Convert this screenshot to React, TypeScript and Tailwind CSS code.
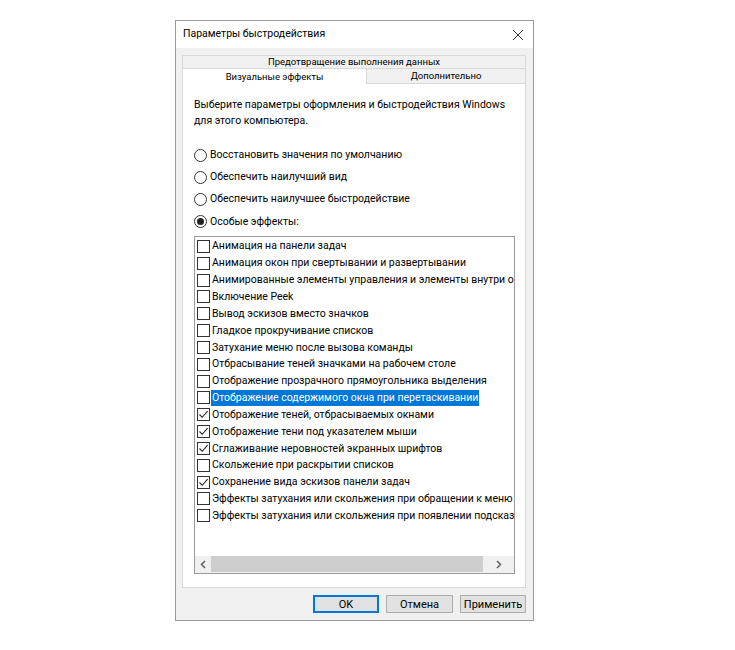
import React from 'react';

type Effect = { label: string; checked: boolean; selected?: boolean };

const effects: Effect[] = [
  { label: 'Анимация на панели задач', checked: false },
  { label: 'Анимация окон при свертывании и развертывании', checked: false },
  { label: 'Анимированные элементы управления и элементы внутри окна', checked: false },
  { label: 'Включение Peek', checked: false },
  { label: 'Вывод эскизов вместо значков', checked: false },
  { label: 'Гладкое прокручивание списков', checked: false },
  { label: 'Затухание меню после вызова команды', checked: false },
  { label: 'Отбрасывание теней значками на рабочем столе', checked: false },
  { label: 'Отображение прозрачного прямоугольника выделения', checked: false },
  { label: 'Отображение содержимого окна при перетаскивании', checked: false, selected: true },
  { label: 'Отображение теней, отбрасываемых окнами', checked: true },
  { label: 'Отображение тени под указателем мыши', checked: true },
  { label: 'Сглаживание неровностей экранных шрифтов', checked: true },
  { label: 'Скольжение при раскрытии списков', checked: false },
  { label: 'Сохранение вида эскизов панели задач', checked: true },
  { label: 'Эффекты затухания или скольжения при обращении к меню', checked: false },
  { label: 'Эффекты затухания или скольжения при появлении подсказок', checked: false },
];

const radios = [
  { label: 'Восстановить значения по умолчанию', on: false },
  { label: 'Обеспечить наилучший вид', on: false },
  { label: 'Обеспечить наилучшее быстродействие', on: false },
  { label: 'Особые эффекты:', on: true },
];

const Radio = ({ on }: { on: boolean }) => (
  <span className="w-[13px] h-[13px] rounded-full border border-[#333] bg-white flex items-center justify-center shrink-0">
    {on && <span className="w-[7px] h-[7px] rounded-full bg-[#222]" />}
  </span>
);

const Checkbox = ({ checked }: { checked: boolean }) => (
  <span className="w-[13px] h-[13px] border border-[#333] bg-white flex items-center justify-center shrink-0">
    {checked && (
      <svg width="11" height="11" viewBox="0 0 11 11" fill="none">
        <path d="M1.5 5.5 L4.2 8.3 L9.6 2.2" stroke="#222" strokeWidth="1.1" />
      </svg>
    )}
  </span>
);

export default function App() {
  return (
    <div
      className="min-h-screen bg-white pt-[20px] pl-[175px] text-[10.5px] text-black"
      style={{ fontFamily: 'Roboto, "Segoe UI", sans-serif' }}
    >
      <div className="w-[359px] h-[601px] border border-[#9a9a9a] flex flex-col">
        {/* title bar */}
        <div className="h-[27px] bg-white flex items-center justify-between pl-[7px] pr-[9px]">
          <span className="text-[10.5px] leading-none">Параметры быстродействия</span>
          <svg width="12" height="12" viewBox="0 0 12 12" fill="none">
            <path d="M1 1 L11 11 M11 1 L1 11" stroke="#333" strokeWidth="1" />
          </svg>
        </div>

        <div className="flex-1 bg-[#f0f0f0] flex flex-col pl-[6px] pr-[7px] pt-[7px]">
          {/* tabs */}
          <div className="h-[13px] border border-b-0 border-[#d9d9d9] flex items-center justify-center text-[9.5px] leading-none">
            Предотвращение выполнения данных
          </div>
          <div className="flex h-[16px]">
            <div className="w-[185px] bg-white border border-b-0 border-[#d9d9d9] flex items-center justify-center text-[9.5px] leading-none">
              Визуальные эффекты
            </div>
            <div className="flex-1 border border-l-0 border-[#d9d9d9] flex items-center justify-center text-[9.5px] leading-none">
              Дополнительно
            </div>
          </div>

          {/* panel */}
          <div className="h-[504px] bg-white border border-t-0 border-[#d9d9d9] flex flex-col pl-[11px] pr-[10px] pt-[13px]">
            <p className="leading-[16px] whitespace-nowrap">
              Выберите параметры оформления и быстродействия Windows
              <br />
              для этого компьютера.
            </p>

            <div className="mt-[18px] flex flex-col gap-[6.3px]">
              {radios.map((r) => (
                <div key={r.label} className="flex items-center gap-[3px] h-[16px]">
                  <Radio on={r.on} />
                  <span className="leading-none">{r.label}</span>
                </div>
              ))}
            </div>

            {/* list */}
            <div className="mt-[6px] h-[338px] border border-[#9b9b9b] flex flex-col overflow-hidden">
              <div className="flex-1 pt-[1px] overflow-hidden">
                {effects.map((e) => (
                  <div key={e.label} className="h-[16.85px] flex items-center pl-[2px] whitespace-nowrap">
                    <Checkbox checked={e.checked} />
                    <span
                      className={`ml-[1px] pl-[1px] pr-[1px] h-[16px] flex items-center ${
                        e.selected ? 'bg-[#0078d7] text-white' : ''
                      }`}
                    >
                      {e.label}
                    </span>
                  </div>
                ))}
              </div>
              <div className="h-[17px] bg-[#f0f0f0] flex items-center">
                <span className="w-[16px] flex justify-center">
                  <svg width="6" height="9" viewBox="0 0 6 9" fill="none">
                    <path d="M5 1 L1.5 4.5 L5 8" stroke="#606060" strokeWidth="1.5" />
                  </svg>
                </span>
                <div className="w-[272px] h-[16px] bg-[#cdcdcd]" />
                <span className="flex-1 flex justify-center">
                  <svg width="6" height="9" viewBox="0 0 6 9" fill="none">
                    <path d="M1 1 L4.5 4.5 L1 8" stroke="#606060" strokeWidth="1.5" />
                  </svg>
                </span>
              </div>
            </div>
          </div>

          {/* buttons */}
          <div className="flex justify-end gap-[7px] mt-[7px]">
            <button className="w-[66px] h-[18px] bg-[#e1e1e1] border-2 border-[#0078d7] text-[11px] leading-none flex items-center justify-center">
              OK
            </button>
            <button className="w-[67px] h-[18px] bg-[#e1e1e1] border border-[#adadad] text-[11px] leading-none flex items-center justify-center">
              Отмена
            </button>
            <button className="w-[66px] h-[18px] bg-[#e1e1e1] border border-[#adadad] text-[11px] leading-none flex items-center justify-center">
              Применить
            </button>
          </div>
        </div>
      </div>
    </div>
  );
}
